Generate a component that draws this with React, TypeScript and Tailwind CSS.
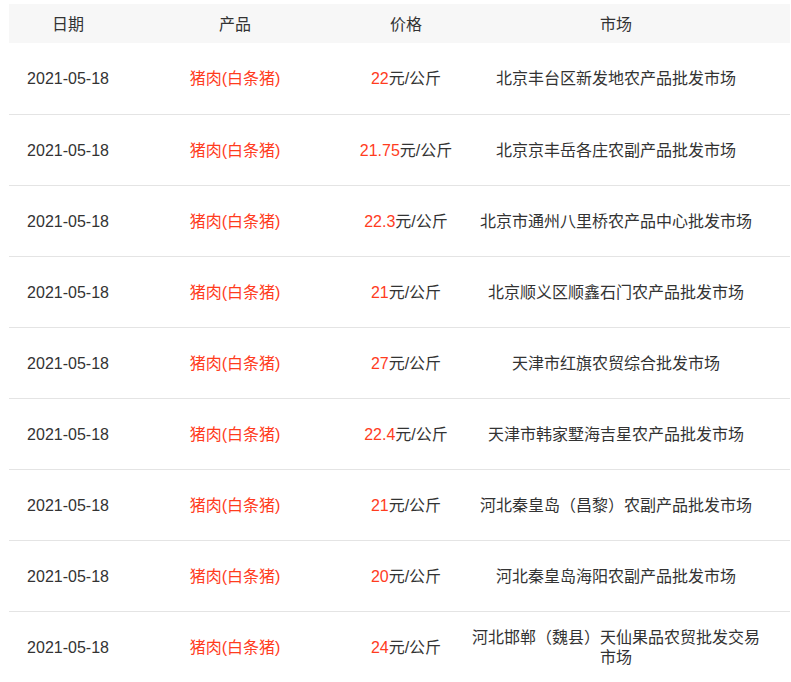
import React from 'react';

interface PriceRow {
  date: string;
  product: string;
  price: string;
  market: string;
}

const rows: PriceRow[] = [
  { date: '2021-05-18', product: '猪肉(白条猪)', price: '22', market: '北京丰台区新发地农产品批发市场' },
  { date: '2021-05-18', product: '猪肉(白条猪)', price: '21.75', market: '北京京丰岳各庄农副产品批发市场' },
  { date: '2021-05-18', product: '猪肉(白条猪)', price: '22.3', market: '北京市通州八里桥农产品中心批发市场' },
  { date: '2021-05-18', product: '猪肉(白条猪)', price: '21', market: '北京顺义区顺鑫石门农产品批发市场' },
  { date: '2021-05-18', product: '猪肉(白条猪)', price: '27', market: '天津市红旗农贸综合批发市场' },
  { date: '2021-05-18', product: '猪肉(白条猪)', price: '22.4', market: '天津市韩家墅海吉星农产品批发市场' },
  { date: '2021-05-18', product: '猪肉(白条猪)', price: '21', market: '河北秦皇岛（昌黎）农副产品批发市场' },
  { date: '2021-05-18', product: '猪肉(白条猪)', price: '20', market: '河北秦皇岛海阳农副产品批发市场' },
  { date: '2021-05-18', product: '猪肉(白条猪)', price: '24', market: '河北邯郸（魏县）天仙果品农贸批发交易市场' },
];

export default function App() {
  return (
    <div
      className="w-[791px] h-[682px] overflow-hidden bg-white pt-[4px] pl-[9px] pr-px text-[#333] text-[16px]"
      style={{ fontFamily: '"Liberation Sans", Arial, "Noto Sans CJK SC", sans-serif' }}
    >
      <table className="w-[781px] table-fixed border-collapse">
        <colgroup>
          <col className="w-[118px]" />
          <col className="w-[216px]" />
          <col className="w-[126px]" />
          <col className="w-[321px]" />
        </colgroup>
        <thead>
          <tr className="bg-[#f7f7f7] h-[39px]">
            <th className="font-normal text-center p-0 pt-[2px]">日期</th>
            <th className="font-normal text-center p-0 pt-[2px]">产品</th>
            <th className="font-normal text-center p-0 pt-[2px]">价格</th>
            <th className="font-normal text-center p-0 pt-[2px] pr-[27px]">市场</th>
          </tr>
        </thead>
        <tbody>
          {rows.map((r, i) => (
            <tr key={i} className="h-[71px] border-b border-[#e4e4e4]">
              <td className="text-center p-0 pt-[2px]">{r.date}</td>
              <td className="text-center p-0 pt-[2px] text-[#ff3c1e]">{r.product}</td>
              <td className="text-center p-0 pt-[2px]">
                <span className="text-[#ff3c1e]">{r.price}</span>元/公斤
              </td>
              <td className="text-center p-0 pt-[2px] pr-[27px] leading-[20px]">{r.market}</td>
            </tr>
          ))}
        </tbody>
      </table>
    </div>
  );
}
